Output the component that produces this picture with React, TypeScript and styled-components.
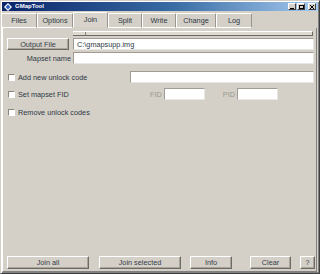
import React from 'react'
import styled, { createGlobalStyle } from 'styled-components'

const GlobalStyle = createGlobalStyle`
  html, body {
    margin: 0;
    padding: 0;
    background: #d4d0c8;
  }
  * { box-sizing: border-box; }
`

const Window = styled.div`
  width: 320px;
  height: 274px;
  display: flex;
  flex-direction: column;
  background: #d4d0c8;
  border: 1px solid;
  border-color: #d4d0c8 #404040 #404040 #d4d0c8;
  box-shadow: inset 1px 1px 0 #ffffff, inset -1px -1px 0 #808080;
  font-family: "Liberation Sans", Arial, sans-serif;
  font-size: 7.3px;
  color: #2e3844;
  overflow: hidden;
`

const TitleBar = styled.div`
  height: 9px;
  margin: 1px 1px 0 1px;
  display: flex;
  align-items: center;
  gap: 3px;
  padding: 0 2px 0 2px;
  background: linear-gradient(to right, #0a246a, #3a6ea5 55%, #a6caf0);
`

const TitleText = styled.span`
  flex: 1;
  color: #ffffff;
  font-weight: bold;
  font-size: 6px;
  line-height: 9px;
`

const Caption = styled.div`
  display: flex;
  gap: 1px;
`

const CaptionButton = styled.div<{ $gapLeft?: boolean }>`
  width: 8px;
  height: 7px;
  margin-left: ${p => (p.$gapLeft ? '2px' : '0')};
  background: #d4d0c8;
  border: 1px solid;
  border-color: #ffffff #404040 #404040 #ffffff;
  display: flex;
  align-items: center;
  justify-content: center;
`

const TabBar = styled.div`
  height: 17px;
  display: flex;
  align-items: flex-end;
`

const Tab = styled.div<{ $w: number; $active?: boolean }>`
  width: ${p => p.$w}px;
  height: ${p => (p.$active ? 16 : 15)}px;
  display: flex;
  align-items: center;
  justify-content: center;
  background: ${p => (p.$active ? '#d8d4cc' : '#d4d0c8')};
  border-top: 1px solid #ffffff;
  border-left: 1px solid #ffffff;
  border-right: 1px solid #9a968e;
  border-bottom: ${p => (p.$active ? '1px solid #d4d0c8' : '1px solid #ffffff')};
  border-radius: 1px 1px 0 0;
  line-height: 1;
`

const Panel = styled.div`
  flex: 1;
  margin: 0 2px 1px 1px;
  display: flex;
  flex-direction: column;
  border-left: 1px solid #ffffff;
  border-right: 1px solid #808080;
  border-bottom: 1px solid #808080;
  padding: 3px 2px 1px 4px;
`

const HeaderStrip = styled.div`
  margin-left: 66px;
  width: 240px;
  height: 5px;
  display: flex;
  background: #dedad2;
  border-top: 1px solid #ffffff;
  border-bottom: 1px solid #6e6a64;
  border-right: 1px solid #6e6a64;
`

const StripCell = styled.div<{ $w?: number }>`
  width: ${p => (p.$w ? `${p.$w}px` : 'auto')};
  flex: ${p => (p.$w ? 'none' : '1')};
  border-right: ${p => (p.$w ? '1px solid #8a867e' : 'none')};
`

const Row = styled.div<{ $h: number; $mt: number }>`
  height: ${p => p.$h}px;
  margin-top: ${p => p.$mt}px;
  display: flex;
  align-items: center;
`

const Button = styled.div<{ $w: number; $ml?: number; $h?: number }>`
  width: ${p => p.$w}px;
  height: ${p => p.$h ?? 12}px;
  margin-left: ${p => p.$ml ?? 0}px;
  flex: none;
  display: flex;
  align-items: center;
  justify-content: center;
  background: #d4d0c8;
  border: 1px solid;
  border-color: #ffffff #6e6a64 #6e6a64 #ffffff;
  box-shadow: inset -1px -1px 0 #a8a49c;
  color: #343c48;
`

const Field = styled.div<{ $w: number; $ml: number; $h?: number }>`
  width: ${p => p.$w}px;
  height: ${p => p.$h ?? 12}px;
  margin-left: ${p => p.$ml}px;
  flex: none;
  display: flex;
  align-items: center;
  padding-left: 3px;
  background: #ffffff;
  border: 1px solid;
  border-color: #a09c94 #e8e6e2 #e8e6e2 #a09c94;
  color: #2e3844;
`

const Label = styled.div<{ $w?: number; $ml?: number; $disabled?: boolean }>`
  width: ${p => (p.$w ? `${p.$w}px` : 'auto')};
  margin-left: ${p => p.$ml ?? 0}px;
  flex: none;
  text-align: right;
  color: ${p => (p.$disabled ? '#9a968e' : '#2e3844')};
`

const Check = styled.label`
  display: flex;
  align-items: center;
  gap: 3px;
  margin-left: 1px;
`

const CheckBox = styled.span`
  width: 7px;
  height: 7px;
  background: #ffffff;
  border: 1px solid;
  border-color: #8a867e #ffffff #ffffff #8a867e;
`

const Spacer = styled.div`
  flex: 1;
`

const Footer = styled.div`
  height: 13px;
  display: flex;
  align-items: center;
  margin-bottom: 1px;
`

const tabs = [
  { label: 'Files', w: 36 },
  { label: 'Options', w: 36 },
  { label: 'Join', w: 35, active: true },
  { label: 'Split', w: 34 },
  { label: 'Write', w: 34 },
  { label: 'Change', w: 40 },
  { label: 'Log', w: 36 },
]

const AppIcon = () => (
  <svg width="8" height="8" viewBox="0 0 8 8">
    <path d="M4 0 L8 4 L4 8 L0 4 Z" fill="#ffffff" />
    <path d="M4 1.6 L6.4 4 L4 6.4 L1.6 4 Z" fill="#2a5cc8" />
  </svg>
)

const App = () => {
  return (
    <>
      <GlobalStyle />
      <Window>
        <TitleBar>
          <AppIcon />
          <TitleText>GMapTool</TitleText>
          <Caption>
            <CaptionButton>
              <svg width="4" height="4" viewBox="0 0 4 4">
                <rect x="0" y="3" width="4" height="1" fill="#000" />
              </svg>
            </CaptionButton>
            <CaptionButton>
              <svg width="5" height="4" viewBox="0 0 5 4">
                <rect x="0.5" y="0.5" width="4" height="3" fill="none" stroke="#000" strokeWidth="1" />
              </svg>
            </CaptionButton>
            <CaptionButton $gapLeft>
              <svg width="4" height="4" viewBox="0 0 4 4">
                <path d="M0 0 L4 4 M4 0 L0 4" stroke="#000" strokeWidth="1" />
              </svg>
            </CaptionButton>
          </Caption>
        </TitleBar>

        <TabBar>
          {tabs.map(t => (
            <Tab key={t.label} $w={t.w} $active={t.active}>
              {t.label}
            </Tab>
          ))}
        </TabBar>

        <Panel>
          <HeaderStrip>
            <StripCell $w={13} />
            <StripCell />
          </HeaderStrip>

          <Row $h={12} $mt={2}>
            <Button $w={62}>Output File</Button>
            <Field $w={241} $ml={4}>C:\gmapsupp.img</Field>
          </Row>

          <Row $h={12} $mt={2}>
            <Label $w={64}>Mapset name</Label>
            <Field $w={241} $ml={2} />
          </Row>

          <Row $h={12} $mt={7}>
            <Check>
              <CheckBox />
              Add new unlock code
            </Check>
            <Spacer />
            <Field $w={184} $ml={0} />
          </Row>

          <Row $h={12} $mt={5}>
            <Check>
              <CheckBox />
              Set mapset FID
            </Check>
            <Spacer />
            <Label $disabled>FID</Label>
            <Field $w={41} $ml={2} />
            <Label $ml={18} $disabled>PID</Label>
            <Field $w={41} $ml={2} />
            <Label $w={36} />
          </Row>

          <Row $h={10} $mt={7}>
            <Check>
              <CheckBox />
              Remove unlock codes
            </Check>
          </Row>

          <Spacer />

          <Footer>
            <Button $w={82} $h={13}>Join all</Button>
            <Button $w={82} $h={13} $ml={10}>Join selected</Button>
            <Button $w={42} $h={13} $ml={9}>Info</Button>
            <Button $w={41} $h={13} $ml={18}>Clear</Button>
            <Button $w={15} $h={13} $ml={9}>?</Button>
          </Footer>
        </Panel>
      </Window>
    </>
  )
}

export default App
